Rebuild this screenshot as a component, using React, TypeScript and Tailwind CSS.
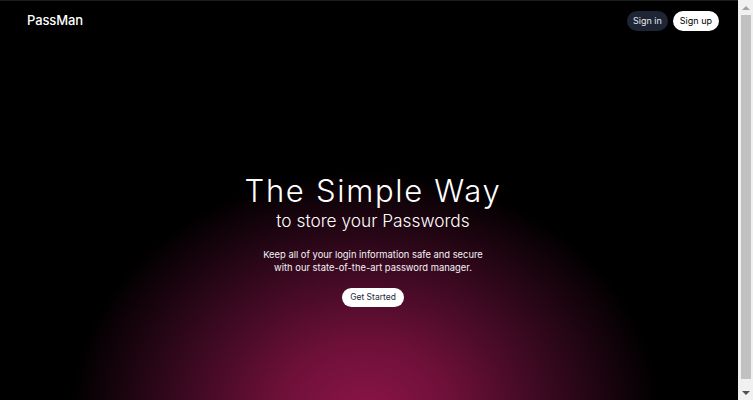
import React from "react";

function FakeScrollbar() {
  return (
    <div className="flex h-full w-[15px] shrink-0 flex-col items-center bg-[#f1f1f1]">
      <div className="flex h-[15px] w-full items-center justify-center">
        <div className="h-0 w-0 border-x-[4px] border-b-[4px] border-x-transparent border-b-[#a3a3a3]" />
      </div>
      <div className="mb-[6px] w-[10px] flex-1 bg-[#c1c1c1]" />
      <div className="flex h-[15px] w-full items-center justify-center">
        <div className="h-0 w-0 border-x-[4px] border-t-[4px] border-x-transparent border-t-[#505050]" />
      </div>
    </div>
  );
}

export default function App() {
  return (
    <div className="flex h-[400px] w-full overflow-hidden bg-black" style={{ fontFamily: "Inter, 'Open Sans', sans-serif" }}>
      <div className="relative flex-1 border-t border-[#1c1c1c] pl-2 text-white">
        <div className="pointer-events-none absolute inset-0 bg-[radial-gradient(ellipse_295px_245px_at_365px_415px,#8c1447_0%,#6e1039_30%,#3a0920_62%,#000000_100%)]" />
        <div className="relative">
          <nav className="flex h-[39px] items-center justify-between px-[19px]">
            <span className="text-[13px] font-medium tracking-[-0.1px]">PassMan</span>
            <div className="flex items-center gap-[5px]">
              <button className="h-[20px] rounded-full bg-[#1e2535] px-[6px] text-[9px] text-gray-200">
                Sign in
              </button>
              <button className="h-[20px] rounded-full bg-white px-[7px] text-[9px] text-black">
                Sign up
              </button>
            </div>
          </nav>
          <main className="flex flex-col items-center pt-[132px]">
            <h1 className="text-[31px] font-light leading-[38px] tracking-[1.7px]">The Simple Way</h1>
            <h2 className="mt-[0px] text-[17.3px] font-light leading-[22px]">to store your Passwords</h2>
            <p className="mt-[16px] text-center text-[9.4px] leading-[13px] text-gray-100">
              Keep all of your login information safe and secure
              <br />
              with our state-of-the-art password manager.
            </p>
            <button className="mt-[14px] h-[19px] rounded-full bg-white px-[8px] text-[8.5px] text-gray-800">
              Get Started
            </button>
          </main>
        </div>
      </div>
      <FakeScrollbar />
    </div>
  );
}
